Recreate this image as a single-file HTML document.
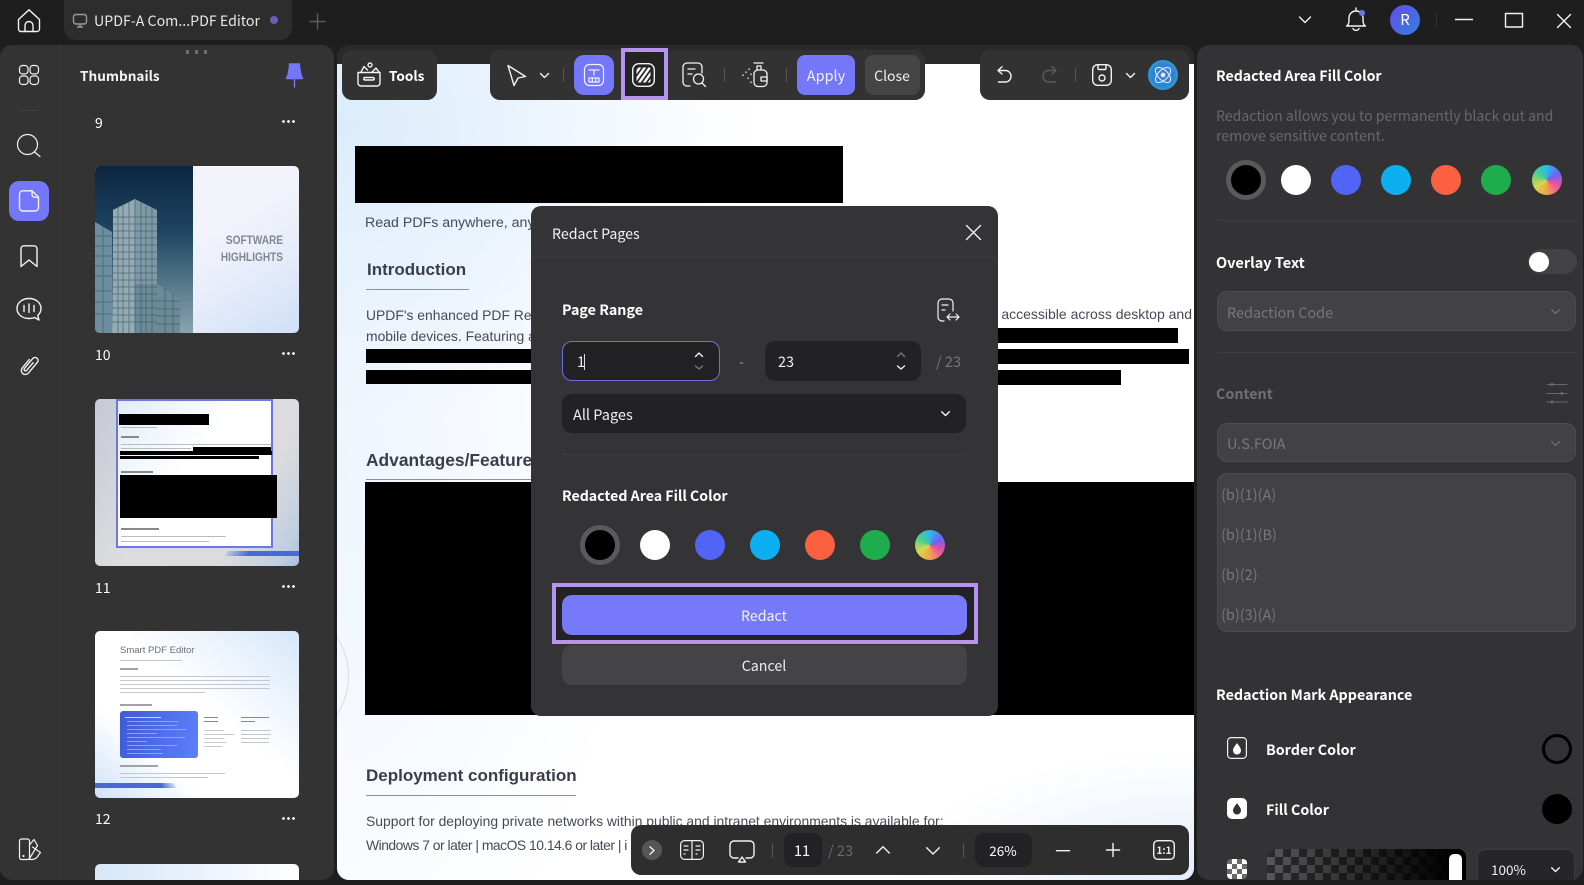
<!DOCTYPE html>
<html><head><meta charset="utf-8"><style>
*{box-sizing:border-box}
html,body{margin:0;padding:0;width:1584px;height:885px;overflow:hidden;background:#1e1e1f}
body{position:relative;font-family:"Noto Sans CJK SC","Liberation Sans",sans-serif;color:#fff}
.a{position:absolute}
.t{position:absolute;white-space:nowrap;line-height:20px;transform:translateY(-50%)}
.c{transform:translate(-50%,-50%)}
.b{font-weight:700}
svg{position:absolute;overflow:visible;fill:none;stroke:#f2f2f2;stroke-width:1.4;stroke-linecap:round;stroke-linejoin:round}
.d{font-family:"Liberation Sans",sans-serif;color:#454a56;font-size:14px}
.h{font-weight:700;font-size:17px;color:#3a3e4a;font-family:"Liberation Sans",sans-serif}
.k{background:#000;position:absolute}
.l{background:#8d9097;height:1px;position:absolute}
.dot{position:absolute;border-radius:50%;width:30px;height:30px;transform:translate(-50%,-50%)}
.ring{position:absolute;border-radius:50%;width:40px;height:40px;background:#000;border:5px solid #5a5a5c;transform:translate(-50%,-50%)}
.rb{background:conic-gradient(#2fb6e8,#6d62f2,#f04fa0,#f2a34a,#d6d84a,#4fd08c,#2fb6e8)}
.mini{position:absolute;height:1px;background:#8b8f9a}
.more{position:absolute;left:282px;width:13px;height:3px;background:radial-gradient(circle at 1.500px 1.500px,#eee 1.300px,transparent 1.500px) 0 0/5px 3px}
</style></head><body>

<!-- top bar -->
<svg style="left:17px;top:9px" width="24" height="24" viewBox="0 0 24 24"><path d="M1.500 10.500 12 .8l10.500 9.700v9.500a2.500 2.500 0 0 1-2.500 2.500H4a2.500 2.500 0 0 1-2.500-2.500z"/><path d="M8 22.500v-6a4 4 0 0 1 8 0v6"/></svg>
<div class="a" style="left:64px;top:0;width:228px;height:40px;background:#2d2d2e;border-radius:0 0 12px 12px"></div>
<svg style="left:73px;top:14px;stroke:#9a9a9c" width="14" height="14" viewBox="0 0 14 14"><rect x=".5" y=".5" width="13" height="9.500" rx="2.500"/><path d="M7 10v3M4.500 13h5"/></svg>
<div class="t" style="left:94px;top:21px;font-size:14.200px;color:#e6e6e6">UPDF-A Com...PDF Editor</div>
<div class="a" style="left:270px;top:16px;width:8px;height:8px;border-radius:50%;background:#6660b8"></div>
<svg style="left:310px;top:14px;stroke:#5c5c5e" width="15" height="15"><path d="M7.500 0v15M0 7.500h15"/></svg>

<svg style="left:1299px;top:16px" width="12" height="8"><path d="M.5 1 6 6.500 11.500 1"/></svg>
<svg style="left:1346px;top:7px" width="20" height="25" viewBox="0 0 20 25"><path d="M1 19c2-2 2-4 2-8 0-4 3-7 7-7s7 3 7 7c0 4 0 6 2 8zM.5 19h19M7 21.500c1 2.500 5 2.500 6 0M10 1v3"/></svg>
<div class="a" style="left:1359px;top:10px;width:6px;height:6px;border-radius:50%;background:#7071f0"></div>
<div class="a" style="left:1390px;top:5px;width:30px;height:30px;border-radius:50%;background:linear-gradient(135deg,#6a4be6,#2f7fe0)"></div>
<div class="t c" style="left:1405px;top:20px;font-size:15px">R</div>
<div class="a" style="left:1436px;top:13px;width:1px;height:15px;background:#333"></div>
<svg style="left:1455px;top:19px" width="18" height="2"><path d="M.5 .5h17"/></svg>
<svg style="left:1505px;top:13px" width="18" height="14"><rect x=".5" y=".5" width="17" height="13.500"/></svg>
<svg style="left:1557px;top:14px" width="14" height="14"><path d="M.5 .5l13 13M13.500 .5l-13 13"/></svg>

<!-- left panel -->
<div class="a" style="left:0;top:45px;width:334px;height:835px;background:#333334;border-radius:12px"></div>
<div class="a" style="left:59px;top:45px;width:1px;height:835px;background:#3a3a3b"></div>
<div class="a" style="left:186px;top:50px;width:22px;height:5px">
<i class="a" style="left:0;width:3px;height:4px;background:#6c6c6e"></i><i class="a" style="left:9px;width:3px;height:4px;background:#6c6c6e"></i><i class="a" style="left:18px;width:3px;height:4px;background:#6c6c6e"></i></div>
<svg style="left:19px;top:65px;stroke-width:1.200" width="20" height="20"><rect x=".5" y=".5" width="8.500" height="8.500" rx="3"/><rect x="11" y=".5" width="8.500" height="8.500" rx="3"/><rect x=".5" y="11" width="8.500" height="8.500" rx="3"/><rect x="11" y="11" width="8.500" height="8.500" rx="3"/></svg>
<div class="a" style="left:19px;top:110px;width:20px;height:1px;background:#3f3f40"></div>
<svg style="left:17px;top:134px;stroke-width:1.200" width="24" height="24"><circle cx="10.500" cy="10.500" r="10"/><path d="M17.500 18 23 22.500"/></svg>
<div class="a" style="left:9px;top:181px;width:40px;height:40px;border-radius:10px;background:#7477f8"></div>
<svg style="left:19px;top:190px" width="20" height="22"><path d="M3.500.8h9.500l6.500 6.500v10.200a3.500 3.500 0 0 1-3.500 3.500H3.500A3.500 3.500 0 0 1 0.500 17.500V4A3.500 3.500 0 0 1 3.500.8zM13 .8v3.500a3 3 0 0 0 3 3h3.500"/></svg>
<svg style="left:20px;top:245px" width="18" height="23"><path d="M1 21.500V3.500A3 3 0 0 1 4 .8h10a3 3 0 0 1 3 2.700v18L9 15z"/></svg>
<svg style="left:16px;top:297px" width="26" height="25" viewBox="0 0 26 25"><path d="M13 1.500C6.500 1.500 1 5.500 1 11.500s5.500 10 12 10c2 0 4-.3 5.500-1L23 23l-1.300-4.500C24 16.500 25 14 25 11.500 25 5.500 19.500 1.500 13 1.500z"/><path d="M8 8.500v6M13 7v8.500M18 8.500v6"/></svg>
<svg style="left:19px;top:354px" width="21" height="23" viewBox="0 0 21 23"><g transform="rotate(40 10.500 11.500)"><path d="M6.500 7v11a4 4 0 0 0 8 0V4a3 3 0 0 0-6 0v13a1.500 1.500 0 0 0 3 0V7"/></g></svg>
<svg style="left:19px;top:838px;stroke-width:1.200" width="22" height="23" viewBox="0 0 22 23"><rect x=".5" y="1" width="10" height="20.500" rx="2"/><path d="M10.500 7 15 1.500l3.500 6-8 13M13.500 9l8 5.500-2 2.500c-1 2.500-3 4-6 4.500h-3"/><circle cx="4.500" cy="18" r=".5"/></svg>

<div class="t b" style="left:80px;top:75px;font-size:13.600px;color:#f5f5f5">Thumbnails</div>
<svg style="left:286px;top:63px;fill:#7477f8;stroke:#7477f8" width="17" height="25" viewBox="0 0 17 25"><path d="M3.500 1h10v3l1.500 8 1.500 3.500H.5L2 12l1.500-8z"/><path d="M8.500 15.500V24"/></svg>
<div class="t" style="left:95px;top:123px;font-size:14px">9</div>
<div class="t" style="left:95px;top:355px;font-size:14px">10</div>
<div class="t" style="left:95px;top:588px;font-size:14px">11</div>
<div class="t" style="left:95px;top:819px;font-size:14px">12</div>
<div class="more" style="top:120px"></div>
<div class="more" style="top:352px"></div>
<div class="more" style="top:585px"></div>
<div class="more" style="top:817px"></div>

<!-- thumb 10 -->
<div class="a" style="left:95px;top:166px;width:204px;height:167px;border-radius:5px;overflow:hidden;background:linear-gradient(150deg,#f3f4fb 45%,#e6ecfa 70%,#cfe0f7);">
 <div class="a" style="left:0;top:0;width:98px;height:167px;background:linear-gradient(180deg,#0c2540 0%,#1f4560 40%,#5d7f90 75%,#8ba3b0)"></div>
 <svg style="left:0;top:0;stroke:none" width="98" height="167">
  <polygon fill="#7f9aa6" points="18,44 40,33 62,44 62,167 18,167"/>
  <polygon fill="#6d8e9e" points="0,56 17,66 17,167 0,167"/>
  <polygon fill="#6d8a99" points="40,118 62,118 85,134 85,167 40,167"/>
  <polygon fill="#a9bcc2" points="18,44 40,33 40,167 18,167" opacity=".5"/>
  <g stroke="#3d5a69" stroke-width="1" opacity=".65"><path d="M18 51h44M18 58h44M18 65h44M18 72h44M18 79h44M18 86h44M18 93h44M18 100h44M18 107h44M18 114h44M18 121h44M18 128h44M18 135h44M18 142h44M18 149h44M18 156h44M23 40v127M28 38v129M34 36v131M40 34v133M46 36v131M51 40v127M57 42v125M0 70h17M0 80h17M0 90h17M0 100h17M0 110h17M0 125h17M0 136h17M0 148h17M8 60v107M62 135h23M62 143h23M62 150h23M62 158h23M70 122v45M78 128v39"/></g>
 </svg>
 <div class="t b" style="right:16px;top:74px;font-size:12px;color:#85878f;font-family:'Liberation Sans',sans-serif;transform:translateY(-50%) scaleX(.84);transform-origin:right center">SOFTWARE</div>
 <div class="t b" style="right:16px;top:91px;font-size:12px;color:#85878f;font-family:'Liberation Sans',sans-serif;transform:translateY(-50%) scaleX(.84);transform-origin:right center">HIGHLIGHTS</div>
</div>

<!-- thumb 11 -->
<div class="a" style="left:95px;top:399px;width:204px;height:167px;border-radius:5px;overflow:hidden;background:linear-gradient(120deg,#c4cad4 0%,#dddddf 40%,#dcdcde 72%,#c1cfe0 92%,#a9bfdc)">
 <div class="a" style="left:21px;top:0;width:157px;height:149px;background:linear-gradient(130deg,#e0edfb 0%,#fff 45%,#fff 100%);border:2px solid #6e76e6"></div>
 <div class="k" style="left:24px;top:15px;width:90px;height:11px"></div>
 <div class="mini" style="left:26px;top:28px;width:36px;background:#bbb"></div>
 <div class="mini" style="left:26px;top:37px;width:18px;height:2px;background:#888"></div>
 <div class="mini" style="left:26px;top:45px;width:150px;background:#bbb"></div>
 <div class="mini" style="left:26px;top:49px;width:70px;background:#bbb"></div>
 <div class="k" style="left:98px;top:48px;width:78px;height:4px"></div>
 <div class="k" style="left:25px;top:52px;width:152px;height:4px"></div>
 <div class="k" style="left:25px;top:57px;width:139px;height:3px"></div>
 <div class="mini" style="left:26px;top:72px;width:32px;height:2px;background:#888"></div>
 <div class="k" style="left:25px;top:76px;width:157px;height:43px"></div>
 <div class="mini" style="left:26px;top:129px;width:38px;height:2px;background:#888"></div>
 <div class="mini" style="left:26px;top:137px;width:105px;background:#bbb"></div>
 <div class="mini" style="left:26px;top:142px;width:88px;background:#bbb"></div>
 <div class="a" style="left:130px;top:152px;width:74px;height:5px;background:linear-gradient(90deg,#b9c9ec,#4b69d6 30%,#4b69d6);transform:skewX(-30deg);transform-origin:0 100%"></div>
</div>

<!-- thumb 12 -->
<div class="a" style="left:95px;top:631px;width:204px;height:167px;border-radius:5px;overflow:hidden;background:linear-gradient(40deg,#cfe2f8 0%,#fff 28%,#fff 55%,#d6e7f9 100%)">
 <div class="t" style="left:25px;top:20px;font-size:9.500px;color:#6a6e79;font-family:'Liberation Sans',sans-serif">Smart PDF Editor</div>
 <div class="mini" style="left:25px;top:29px;width:62px;background:#c5c7cf"></div>
 <div class="mini" style="left:25px;top:37px;width:18px;height:2px;background:#a0a2aa"></div>
 <div class="mini" style="left:25px;top:45px;width:150px;background:#c5c7cf"></div>
 <div class="mini" style="left:25px;top:49px;width:150px;background:#c5c7cf"></div>
 <div class="mini" style="left:25px;top:53px;width:150px;background:#c5c7cf"></div>
 <div class="mini" style="left:25px;top:57px;width:150px;background:#c5c7cf"></div>
 <div class="mini" style="left:25px;top:61px;width:85px;background:#c5c7cf"></div>
 <div class="mini" style="left:25px;top:73px;width:32px;height:2px;background:#a0a2aa"></div>
 <div class="a" style="left:25px;top:80px;width:78px;height:47px;border-radius:3px;background:linear-gradient(100deg,#3e5bd8,#5d7ffb)"></div>
 <div class="mini" style="left:30px;top:86px;width:36px;background:#c9d4fb"></div>
 <div class="mini" style="left:32px;top:90px;width:52px;background:#8ea2f0"></div>
 <div class="mini" style="left:32px;top:94px;width:50px;background:#8ea2f0"></div>
 <div class="mini" style="left:32px;top:98px;width:60px;background:#8ea2f0"></div>
 <div class="mini" style="left:32px;top:102px;width:30px;background:#8ea2f0"></div>
 <div class="mini" style="left:32px;top:106px;width:58px;background:#8ea2f0"></div>
 <div class="mini" style="left:32px;top:110px;width:20px;background:#8ea2f0"></div>
 <div class="mini" style="left:32px;top:114px;width:50px;background:#8ea2f0"></div>
 <div class="mini" style="left:32px;top:118px;width:34px;background:#8ea2f0"></div>
 <div class="mini" style="left:32px;top:122px;width:36px;background:#8ea2f0"></div>
 <div class="mini" style="left:109px;top:86px;width:14px;background:#888"></div>
 <div class="mini" style="left:109px;top:90px;width:14px;background:#888"></div>
 <div class="mini" style="left:109px;top:99px;width:20px;background:#c5c7cf"></div>
 <div class="mini" style="left:109px;top:103px;width:30px;background:#c5c7cf"></div>
 <div class="mini" style="left:109px;top:107px;width:20px;background:#c5c7cf"></div>
 <div class="mini" style="left:109px;top:111px;width:22px;background:#c5c7cf"></div>
 <div class="mini" style="left:109px;top:115px;width:18px;background:#c5c7cf"></div>
 <div class="mini" style="left:146px;top:86px;width:28px;background:#888"></div>
 <div class="mini" style="left:146px;top:90px;width:14px;background:#888"></div>
 <div class="mini" style="left:146px;top:99px;width:30px;background:#c5c7cf"></div>
 <div class="mini" style="left:146px;top:103px;width:30px;background:#c5c7cf"></div>
 <div class="mini" style="left:146px;top:107px;width:28px;background:#c5c7cf"></div>
 <div class="mini" style="left:146px;top:111px;width:28px;background:#c5c7cf"></div>
 <div class="mini" style="left:25px;top:134px;width:38px;height:2px;background:#a0a2aa"></div>
 <div class="mini" style="left:25px;top:142px;width:105px;background:#c5c7cf"></div>
 <div class="mini" style="left:25px;top:146px;width:88px;background:#c5c7cf"></div>
 <div class="a" style="left:0;top:152px;width:72px;height:5px;background:#4b69d6"></div>
 <div class="a" style="left:66px;top:152px;width:14px;height:5px;background:linear-gradient(90deg,#4b69d6,#d7dff8);transform:skewX(30deg)"></div>
</div>
<div class="a" style="left:95px;top:864px;width:204px;height:16px;border-radius:5px 5px 0 0;background:linear-gradient(90deg,#d6e7f9,#eaf2fc 50%,#fff)"></div>

<!-- doc panel -->
<div class="a" style="left:337px;top:45px;width:857px;height:835px;border-radius:12px;overflow:hidden;background:#2a2a2b">
 <div class="a" style="left:0;top:19px;width:857px;height:816px;background:radial-gradient(ellipse 300px 130px at 857px 816px,#e3edfa,rgba(255,255,255,0)),radial-gradient(ellipse 420px 300px at 0 60px,#dcecfb,rgba(255,255,255,0) 100%),radial-gradient(ellipse 300px 600px at 0 400px,#eef5fd,rgba(255,255,255,0)),linear-gradient(#fff,#fff)"></div>
 <div class="a" style="left:-130px;top:560px;width:142px;height:142px;border-radius:50%;border:1px solid #d9dbe2"></div>
</div>
<div class="k" style="left:355px;top:146px;width:488px;height:57px"></div>
<div class="t d" style="left:365px;top:223px;font-size:14.200px">Read PDFs anywhere, any</div>
<div class="t h" style="left:367px;top:270px">Introduction</div>
<div class="l" style="left:366px;top:289px;width:103px"></div>
<div class="t d" style="left:366px;top:315px;font-size:13.900px">UPDF's enhanced PDF Reader</div>
<div class="t d" style="left:366px;top:336px;font-size:13.900px">mobile devices. Featuring a</div>
<div class="k" style="left:366px;top:349px;width:170px;height:14px"></div>
<div class="k" style="left:366px;top:370px;width:170px;height:14px"></div>
<div class="t d" style="right:392px;top:314px;font-size:14px">h accessible across desktop and</div>
<div class="k" style="left:995px;top:328px;width:183px;height:15px"></div>
<div class="k" style="left:995px;top:349px;width:194px;height:15px"></div>
<div class="k" style="left:995px;top:370px;width:126px;height:15px"></div>
<div class="t h" style="left:366px;top:460px;font-size:17.400px">Advantages/Features</div>
<div class="l" style="left:366px;top:479px;width:170px"></div>
<div class="k" style="left:365px;top:482px;width:829px;height:233px"></div>
<div class="t h" style="left:366px;top:776px">Deployment configuration</div>
<div class="l" style="left:366px;top:795px;width:210px"></div>
<div class="t d" style="left:366px;top:821px;font-size:13.900px">Support for deploying private networks within public and intranet environments is available for:</div>
<div class="t d" style="left:366px;top:845px;font-size:13.900px;letter-spacing:-.5px">Windows 7 or later | macOS 10.14.6 or later | i</div>

<!-- Tools box -->
<div class="a" style="left:342px;top:50px;width:95px;height:50px;background:#323233;border-radius:10px"></div>
<svg style="left:357px;top:62px" width="24" height="25" viewBox="0 0 24 25"><path d="M1 10.500h22V21a3 3 0 0 1-3 3H4a3 3 0 0 1-3-3zM8 15.500h8M8 15.500a1 1 0 0 0 0 2.500h8a1 1 0 0 0 0-2.500M4 10l3-5.500 3.500 3.500M15 10l4-4 3 4"/><circle cx="13" cy="3" r="2"/></svg>
<div class="t b" style="left:389px;top:75px;font-size:13.600px">Tools</div>

<!-- toolbar 1 -->
<div class="a" style="left:490px;top:50px;width:435px;height:50px;background:#323233;border-radius:10px"></div>
<svg style="left:507px;top:64px" width="20" height="23" viewBox="0 0 20 23"><path d="M1 1.500 18.500 12.500 11 14l-4 7.500z"/></svg>
<svg style="left:540px;top:73px" width="9" height="6"><path d="M.5 .5 4.500 4.500 8.500 .5"/></svg>
<div class="a" style="left:563px;top:68px;width:1px;height:14px;background:#555"></div>
<div class="a" style="left:574px;top:55px;width:40px;height:40px;border-radius:10px;background:#7477f8"></div>
<svg style="left:584px;top:64px;stroke-width:1.200" width="20" height="22" viewBox="0 0 20 22"><rect x=".5" y=".5" width="19" height="21" rx="5"/><path d="M5 6h10M10 6v5M5 14h10v4H5zM8.300 14v4M11.700 14v4"/></svg>
<div class="a" style="left:621px;top:48px;width:47px;height:52px;border:4px solid #b593ef;background:#232324"></div>
<svg style="left:632px;top:63px" width="23" height="24" viewBox="0 0 23 24"><defs><clipPath id="hc"><rect x="4.500" y="4.500" width="14" height="15" rx="1.500"/></clipPath></defs><rect x=".7" y=".7" width="21.600" height="22.600" rx="6"/><g clip-path="url(#hc)" stroke="#fff" stroke-width="2.400" stroke-linecap="butt"><path d="M11 0-6 24M16 0-1 24M21 0 4 24M26 0 9 24M31 0 14 24"/></g></svg>
<svg style="left:682px;top:62px;stroke-width:1.300" width="24" height="25" viewBox="0 0 24 25"><path d="M8 24H5a4 4 0 0 1-4-4V5a4 4 0 0 1 4-4h11a4 4 0 0 1 4 4v6M6 7h7M6 12h4"/><circle cx="16.500" cy="17" r="5"/><path d="M20 21l3.500 3.500"/></svg>
<div class="a" style="left:724px;top:68px;width:1px;height:14px;background:#555"></div>
<svg style="left:742px;top:61px;stroke-width:1.300" width="26" height="26" viewBox="0 0 26 26"><rect x="12" y="9" width="13" height="16.500" rx="4"/><path d="M15 9V5h4v4M12 2h9M19 16h6v4h-6zM7 8v.5M4 11v.5M9 13v.5M1 14v.5M6 17v.5M9 21v.5"/></svg>
<div class="a" style="left:786px;top:68px;width:1px;height:14px;background:#555"></div>
<div class="a" style="left:797px;top:55px;width:58px;height:40px;border-radius:8px;background:#7477f8"></div>
<div class="t c" style="left:826px;top:76px;font-size:14.500px;color:#f0f0ff">Apply</div>
<div class="a" style="left:865px;top:55px;width:55px;height:40px;border-radius:8px;background:#454546"></div>
<div class="t c" style="left:892px;top:76px;font-size:14px;color:#eee">Close</div>

<!-- toolbar 2 -->
<div class="a" style="left:980px;top:50px;width:209px;height:50px;background:#323233;border-radius:10px"></div>
<svg style="left:997px;top:66px" width="16" height="18" viewBox="0 0 16 18"><path d="M5 .7 1 4.500l4 3.500M1 4.500h8a5.800 5.800 0 0 1 0 11.500H1.500"/></svg>
<svg style="left:1041px;top:66px;stroke:#5a5a5c" width="16" height="18" viewBox="0 0 16 18"><path d="M11 .7l4 3.800-4 3.500M15 4.500H7a5.800 5.800 0 0 0 0 11.500h7.500"/></svg>
<div class="a" style="left:1075px;top:68px;width:1px;height:14px;background:#555"></div>
<svg style="left:1092px;top:64px" width="20" height="22" viewBox="0 0 20 22"><rect x=".7" y=".7" width="18.600" height="20.600" rx="5"/><path d="M6 1v3.500a1 1 0 0 0 1 1h6a1 1 0 0 0 1-1V1"/><circle cx="10" cy="14" r="3"/></svg>
<svg style="left:1126px;top:73px" width="9" height="6"><path d="M.5 .5 4.500 4.500 8.500 .5"/></svg>
<div class="a" style="left:1148px;top:60px;width:30px;height:30px;border-radius:50%;background:radial-gradient(circle at 50% 50%,#4a78dc 0,#2d84d2 50%,#2fa6dc 80%,#1f7fb8)"></div>
<svg style="left:1153px;top:65px;stroke:#d9ecff;stroke-width:1.100" width="20" height="20"><ellipse cx="10" cy="10" rx="9.500" ry="5" transform="rotate(45 10 10)"/><ellipse cx="10" cy="10" rx="9.500" ry="5" transform="rotate(-45 10 10)"/><circle cx="10" cy="10" r="1.800" fill="#e7f3ff"/></svg>

<!-- Modal -->
<div class="a" style="left:531px;top:206px;width:467px;height:510px;background:#343436;border-radius:10px"></div>
<div class="t" style="left:552px;top:234px;font-size:14.200px;color:#f2f2f2">Redact Pages</div>
<svg style="left:966px;top:225px" width="15" height="15"><path d="M.5 .5l14 14M14.500 .5l-14 14"/></svg>
<div class="a" style="left:532px;top:257px;width:465px;height:1px;background:#3d3d3f"></div>
<div class="t b" style="left:562px;top:310px;font-size:14.300px">Page Range</div>
<svg style="left:937px;top:298px;stroke-width:1.200" width="23" height="24" viewBox="0 0 23 24"><path d="M7 23H5a4 4 0 0 1-4-4V5a4 4 0 0 1 4-4h7a4 4 0 0 1 4 4v8M5 7h6M5 12h3M10 19h12M13 16l-3 3 3 3M19 16l3 3-3 3"/></svg>
<div class="a" style="left:562px;top:341px;width:158px;height:40px;border-radius:10px;background:#222224;border:1.500px solid #6d6fd8"></div>
<div class="t" style="left:577px;top:362px;font-size:14.500px;color:#eee">1</div>
<div class="a" style="left:584px;top:354px;width:1px;height:16px;background:#ddd"></div>
<svg style="left:694px;top:351px" width="10" height="20"><path d="M1.500 5.500 5 2l3.500 3.500"/><path d="M1.500 15 5 18l3.500-3" stroke="#777"/></svg>
<div class="t" style="left:739px;top:362px;font-size:14px;color:#999">-</div>
<div class="a" style="left:765px;top:341px;width:156px;height:40px;border-radius:10px;background:#222224"></div>
<div class="t" style="left:778px;top:362px;font-size:14.500px;color:#eee">23</div>
<svg style="left:896px;top:351px" width="10" height="20"><path d="M1.500 5.500 5 2l3.500 3.500" stroke="#777"/><path d="M1.500 15 5 18l3.500-3"/></svg>
<div class="t" style="left:936px;top:362px;font-size:14.500px;color:#77777a">/ 23</div>
<div class="a" style="left:562px;top:394px;width:404px;height:39px;border-radius:10px;background:#222224"></div>
<div class="t" style="left:573px;top:415px;font-size:14.500px;color:#eee">All Pages</div>
<svg style="left:941px;top:411px" width="9" height="6"><path d="M.7 .7 4.500 4.500 8.300 .7"/></svg>
<div class="a" style="left:562px;top:454px;width:405px;height:1px;background:#3d3d3f"></div>
<div class="t b" style="left:562px;top:496px;font-size:14.150px">Redacted Area Fill Color</div>
<div class="ring" style="left:600px;top:545px"></div>
<div class="dot" style="left:655px;top:545px;background:#fff"></div>
<div class="dot" style="left:710px;top:545px;background:#5264f6"></div>
<div class="dot" style="left:765px;top:545px;background:#0cb0f0"></div>
<div class="dot" style="left:820px;top:545px;background:#fb6140"></div>
<div class="dot" style="left:875px;top:545px;background:#1fac4c"></div>
<div class="dot rb" style="left:930px;top:545px"></div>
<div class="a" style="left:552px;top:583px;width:426px;height:61px;border:4px solid #b593ef;background:#232324"></div>
<div class="a" style="left:562px;top:595px;width:405px;height:40px;border-radius:10px;background:#7779fb"></div>
<div class="t c" style="left:764px;top:616px;font-size:14.200px;color:#f0f0ff">Redact</div>
<div class="a" style="left:562px;top:645px;width:405px;height:40px;border-radius:10px;background:#444446"></div>
<div class="t c" style="left:764px;top:666px;font-size:14.200px;color:#eee">Cancel</div>

<!-- bottom bar -->
<div class="a" style="left:631px;top:825px;width:558px;height:50px;background:#2e2e2f;border-radius:10px"></div>
<div class="a" style="left:642px;top:840px;width:20px;height:20px;border-radius:50%;background:#565658"></div>
<svg style="left:649px;top:846px" width="6" height="9"><path d="M1 .7 5 4.500 1 8.300"/></svg>
<svg style="left:680px;top:840px;stroke-width:1.200" width="24" height="20" viewBox="0 0 24 20"><rect x=".6" y=".6" width="22.800" height="18.800" rx="4"/><path d="M12 .6v18.800M4 6h4M4 10h4M16 6h4M16 10h4M4 14h1M16 14h1"/></svg>
<svg style="left:729px;top:840px" width="26" height="24" viewBox="0 0 26 24"><path d="M9 18H5a4 4 0 0 1-4-4V5a4 4 0 0 1 4-4h16a4 4 0 0 1 4 4v9a4 4 0 0 1-4 4h-4"/><path d="M13 17l3.500 5h-7z"/></svg>
<div class="a" style="left:772px;top:843px;width:1px;height:15px;background:#555"></div>
<div class="a" style="left:784px;top:833px;width:38px;height:34px;border-radius:9px;background:#222224"></div>
<div class="t c" style="left:802px;top:851px;font-size:14.500px">11</div>
<div class="t" style="left:828px;top:851px;font-size:14.500px;color:#6a6a6c">/ 23</div>
<svg style="left:876px;top:846px" width="14" height="8"><path d="M.7 7 7 .8 13.300 7"/></svg>
<svg style="left:926px;top:847px" width="14" height="8"><path d="M.7 .8 7 7 13.300 .8"/></svg>
<div class="a" style="left:963px;top:843px;width:1px;height:15px;background:#555"></div>
<div class="a" style="left:975px;top:833px;width:57px;height:34px;border-radius:9px;background:#222224"></div>
<div class="t c" style="left:1003px;top:850px;font-size:13.500px">26%</div>
<svg style="left:1056px;top:850px" width="14" height="2"><path d="M.5 .7h13"/></svg>
<svg style="left:1106px;top:843px" width="14" height="14"><path d="M.5 7h13M7 .5v13"/></svg>
<svg style="left:1153px;top:840px" width="22" height="20"><rect x=".7" y=".7" width="20.600" height="18.600" rx="4"/></svg>
<div class="t c" style="left:1164px;top:850px;font-size:10px;font-weight:700;color:#eee">1:1</div>

<!-- right panel -->
<div class="a" style="left:1197px;top:45px;width:386px;height:835px;background:#333335;border-radius:12px"></div>
<div class="t b" style="left:1216px;top:76px;font-size:14.150px">Redacted Area Fill Color</div>
<div class="t" style="left:1216px;top:116px;font-size:14.120px;color:#68686b">Redaction allows you to permanently black out and</div>
<div class="t" style="left:1216px;top:136px;font-size:14.120px;color:#68686b">remove sensitive content.</div>
<div class="ring" style="left:1246px;top:180px"></div>
<div class="dot" style="left:1296px;top:180px;background:#fff"></div>
<div class="dot" style="left:1346px;top:180px;background:#5264f6"></div>
<div class="dot" style="left:1396px;top:180px;background:#0cb0f0"></div>
<div class="dot" style="left:1446px;top:180px;background:#fb6140"></div>
<div class="dot" style="left:1496px;top:180px;background:#1fac4c"></div>
<div class="dot rb" style="left:1547px;top:180px"></div>
<div class="a" style="left:1217px;top:220px;width:360px;height:1px;background:#3d3d3f"></div>
<div class="t b" style="left:1216px;top:263px;font-size:14.500px">Overlay Text</div>
<div class="a" style="left:1528px;top:249px;width:49px;height:25px;border-radius:13px;background:#424244"></div>
<div class="a" style="left:1529px;top:252px;width:20px;height:20px;border-radius:50%;background:#fff"></div>

<div class="a" style="left:1217px;top:291px;width:359px;height:40px;border-radius:10px;background:#424244;border:1px solid #4c4c4e"></div>
<div class="t" style="left:1227px;top:313px;font-size:14.400px;color:#77777a">Redaction Code</div>
<svg style="left:1551px;top:309px;stroke:#6e6e70" width="9" height="6"><path d="M.7 .7 4.500 4.500 8.300 .7"/></svg>
<div class="a" style="left:1217px;top:352px;width:360px;height:1px;background:#3d3d3f"></div>
<div class="t b" style="left:1216px;top:394px;font-size:14.300px;color:#707073">Content</div>
<svg style="left:1547px;top:381px;stroke:#69696b;stroke-width:1" width="20" height="22"><path d="M0 3.500h20M0 12.500h20M0 21h20"/><circle cx="5" cy="3.500" r="1" fill="#69696b"/><circle cx="15" cy="12.500" r="1" fill="#69696b"/><circle cx="5" cy="21" r="1" fill="#69696b"/></svg>
<div class="a" style="left:1217px;top:423px;width:359px;height:39px;border-radius:10px;background:#424244;border:1px solid #4c4c4e"></div>
<div class="t" style="left:1227px;top:444px;font-size:14.500px;color:#77777a">U.S.FOIA</div>
<svg style="left:1551px;top:441px;stroke:#6e6e70" width="9" height="6"><path d="M.7 .7 4.500 4.500 8.300 .7"/></svg>
<div class="a" style="left:1217px;top:473px;width:359px;height:159px;border-radius:10px;background:#424244;border:1px solid #4c4c4e"></div>
<div class="t" style="left:1221px;top:495px;font-size:14.500px;color:#77777a">(b)(1)(A)</div>
<div class="t" style="left:1221px;top:535px;font-size:14.500px;color:#77777a">(b)(1)(B)</div>
<div class="t" style="left:1221px;top:575px;font-size:14.500px;color:#77777a">(b)(2)</div>
<div class="t" style="left:1221px;top:615px;font-size:14.500px;color:#77777a">(b)(3)(A)</div>

<div class="t b" style="left:1216px;top:695px;font-size:14.300px">Redaction Mark Appearance</div>
<svg style="left:1227px;top:737px;stroke-width:1.200" width="20" height="22"><rect x=".6" y=".6" width="18.800" height="20.800" rx="3.500"/><path d="M10 6c2 3 4 5 4 7.500a4 4 0 0 1-8 0C6 11 8 9 10 6z" fill="#fff" stroke="none"/></svg>
<div class="t b" style="left:1266px;top:750px;font-size:14.300px">Border Color</div>
<div class="a" style="left:1542px;top:734px;width:30px;height:30px;border-radius:50%;border:3px solid #000"></div>
<div class="a" style="left:1227px;top:798px;width:20px;height:21px;border-radius:5px;background:#fff"></div>
<svg style="left:1227px;top:798px;stroke:none" width="20" height="21"><path d="M10 5c2 3 4 5 4 7.500a4 4 0 0 1-8 0C6 10 8 8 10 5z" fill="#333335"/></svg>
<div class="t b" style="left:1266px;top:810px;font-size:14.300px">Fill Color</div>
<div class="a" style="left:1542px;top:794px;width:30px;height:30px;border-radius:50%;background:#000"></div>
<div class="a" style="left:1227px;top:859px;width:20px;height:20px;border-radius:4px;background:repeating-conic-gradient(#fff 0 25%,#6a6a6c 0 50%) 0 0/10px 10px"></div>
<div class="a" style="left:1267px;top:849px;width:199px;height:31px;border-radius:8px 8px 0 0;overflow:hidden;background:repeating-conic-gradient(#5d5d5f 0 25%,#2e2e30 0 50%) 0 0/16px 16px">
 <div class="a" style="left:0;top:0;width:199px;height:31px;background:linear-gradient(90deg,rgba(0,0,0,.05),#000 92%)"></div>
</div>
<div class="a" style="left:1449px;top:854px;width:13px;height:26px;border-radius:5px 5px 0 0;background:#fff"></div>
<div class="a" style="left:1477px;top:849px;width:98px;height:31px;border-radius:8px 8px 0 0;background:#262628;border:1px solid #3d3d3f;border-bottom:0"></div>
<div class="t" style="left:1491px;top:869px;font-size:13.500px;color:#eee">100%</div>
<svg style="left:1551px;top:867px" width="9" height="6"><path d="M.7 .7 4.500 4.500 8.300 .7"/></svg>
<div class="a" style="left:0;top:880px;width:1584px;height:5px;background:#1e1e1f"></div>
</body></html>
